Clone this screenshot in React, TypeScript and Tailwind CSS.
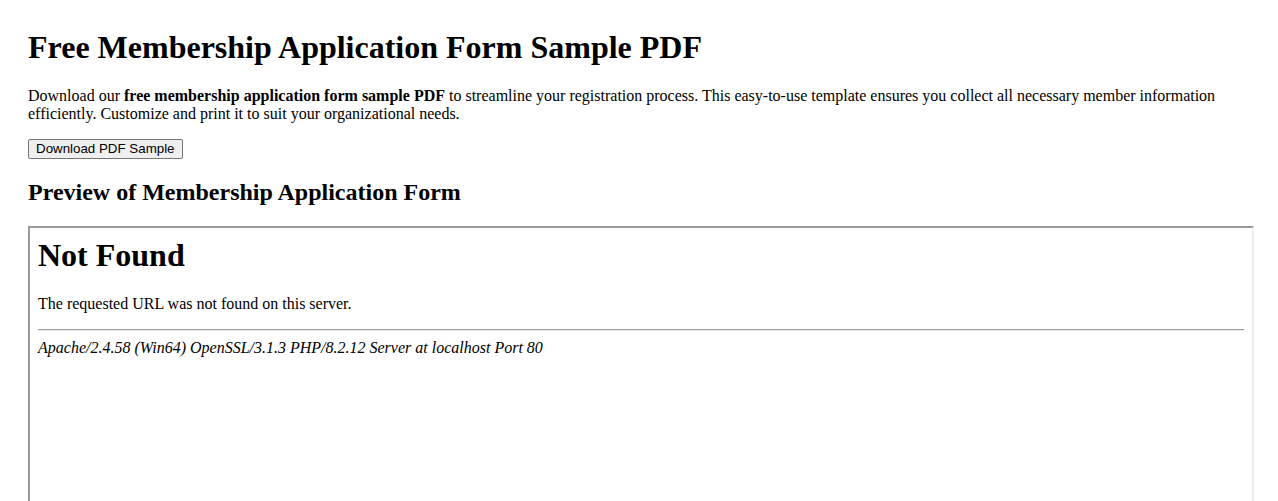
export default function App() {
  return (
    <div className="h-screen overflow-hidden bg-white px-7 font-['Liberation_Serif','Times_New_Roman',serif] text-black">
      <h1 className="mt-[29px] mb-[21px] text-[32px] font-bold leading-[37px]">
        Free Membership Application Form Sample PDF
      </h1>
      <p className="mb-[15px] text-base leading-[18.4px]">
        Download our <strong className="font-bold">free membership application form sample PDF</strong> to
        streamline your registration process. This easy-to-use template ensures you collect all necessary
        member information efficiently. Customize and print it to suit your organizational needs.
      </p>
      <div className="flex">
        <button className="h-5 rounded-[2px] border border-[#767676] bg-[#efefef] px-[7px] font-['Liberation_Sans',Arial,sans-serif] text-[13.33px] leading-[16px] text-black">
          Download PDF Sample
        </button>
      </div>
      <h2 className="mt-[20px] mb-[20px] text-[24px] font-bold leading-[27.6px]">
        Preview of Membership Application Form
      </h2>
      {/* embedded preview frame */}
      <div className="box-content h-[600px] w-full border-2 border-t-[#9a9a9a] border-l-[#9a9a9a] border-r-[#eeeeee] border-b-[#eeeeee] bg-white">
        <div className="px-2 pt-[9px] pb-2">
          <h1 className="text-[32px] font-bold leading-[37px]">Not Found</h1>
          <p className="mt-[21px] text-base leading-[18.4px]">The requested URL was not found on this server.</p>
          <hr className="mt-[15px] h-0 border-t border-b border-t-[#9a9a9a] border-b-[#eeeeee]" />
          <address className="mt-2 text-base italic leading-[18.4px]">
            Apache/2.4.58 (Win64) OpenSSL/3.1.3 PHP/8.2.12 Server at localhost Port 80
          </address>
        </div>
      </div>
    </div>
  )
}
